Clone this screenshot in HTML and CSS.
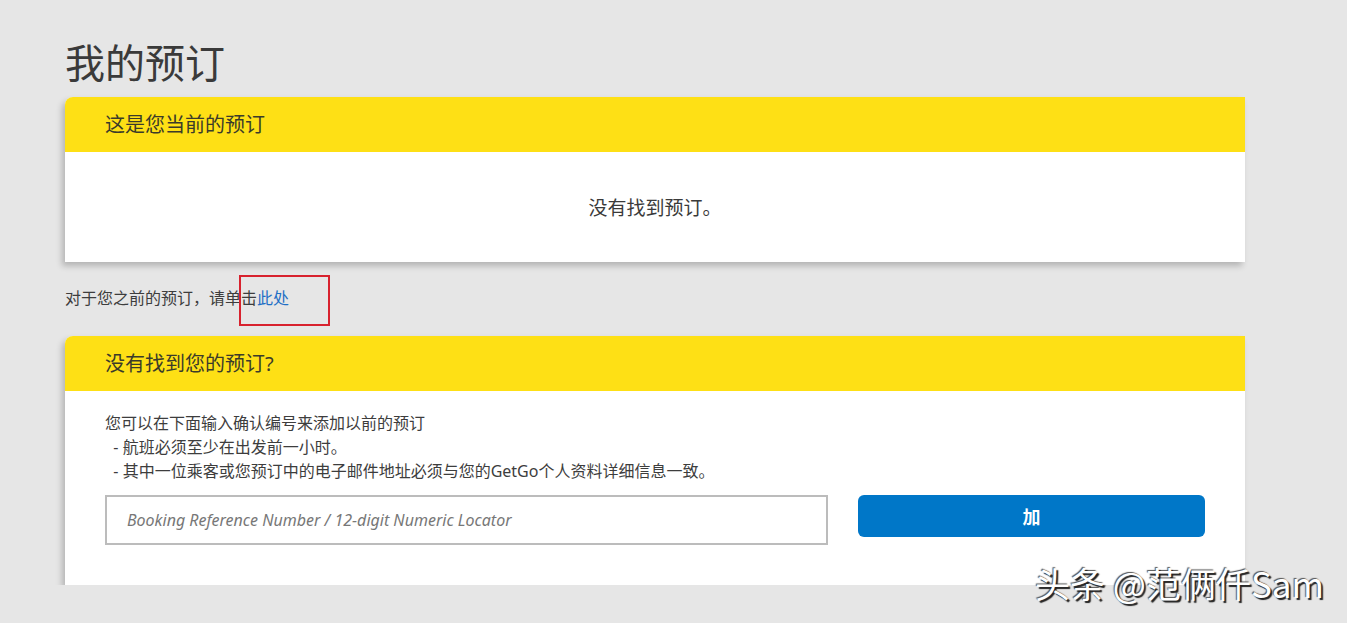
FILE: index.html
```html
<!DOCTYPE html>
<html lang="zh-CN">
<head>
    <meta charset="UTF-8">
    <meta name="viewport" content="width=device-width, initial-scale=1.0">
    <title>我的预订</title>
    <link rel="stylesheet" href="styles.css">
</head>
<body>
    <div class="page">
        <h1>我的预订</h1>

        <div class="card">
            <div class="card-header">这是您当前的预订</div>
            <div class="card-body empty-body">没有找到预订。</div>
        </div>

        <p class="past-link">对于您之前的预订，请单击<a href="#">此处</a><span class="mark-box"></span></p>

        <div class="card">
            <div class="card-header">没有找到您的预订?</div>
            <div class="card-body add-body">
                <div class="notes">
                    <div>您可以在下面输入确认编号来添加以前的预订</div>
                    <div>&nbsp;&nbsp;- 航班必须至少在出发前一小时。</div>
                    <div>&nbsp;&nbsp;- 其中一位乘客或您预订中的电子邮件地址必须与您的GetGo个人资料详细信息一致。</div>
                </div>
                <div class="add-row">
                    <input class="ref-input" type="text" placeholder="Booking Reference Number / 12-digit Numeric Locator">
                    <button class="add-button">加</button>
                </div>
            </div>
        </div>
    </div>

    <div class="watermark">头条 @范俩仟Sam</div>
</body>
</html>
```

FILE: styles.css
```css
body {
    margin: 0;
    background-color: #e6e6e6;
    font-family: "Noto Sans", "Noto Sans CJK SC", sans-serif;
    color: #3d3d3d;
}
.page {
    width: 1180px;
    margin-left: 65px;
}
h1 {
    font-size: 40px;
    line-height: 48px;
    font-weight: normal;
    color: #3a3a3a;
    margin: 39px 0 10px;
}
.card {
    background: white;
    border-radius: 8px 0 0 0;
    box-shadow: -3px 4px 6px rgba(0,0,0,0.22);
}
.card-header {
    height: 55px;
    line-height: 55px;
    padding-left: 40px;
    background-color: #fee015;
    border-radius: 8px 0 0 0;
    font-size: 20px;
    color: #3b3b2a;
}
.empty-body {
    height: 110px;
    line-height: 112px;
    text-align: center;
    font-size: 19px;
    color: #3a3a3a;
}
.past-link {
    position: relative;
    margin: 26px 0 28px;
    font-size: 16px;
    line-height: 20px;
}
.past-link a {
    color: #1f6fc5;
    text-decoration: none;
}
.mark-box {
    position: absolute;
    left: 174px;
    top: -13px;
    width: 87px;
    height: 47px;
    border: 2px solid #d8222e;
}
.add-body {
    padding: 20px 40px 40px;
}
.notes {
    font-size: 16px;
    line-height: 24px;
    color: #3d3d3d;
}
.add-row {
    display: grid;
    grid-template-columns: 723px 1fr;
    gap: 30px;
    margin-top: 12px;
    align-items: start;
}
.ref-input {
    height: 50px;
    box-sizing: border-box;
    border: 2px solid #bcbcbc;
    padding: 0 20px;
    font-family: "Noto Sans", sans-serif;
    font-size: 16px;
    font-style: italic;
    color: #333;
    outline: none;
}
.ref-input::placeholder {
    color: #777;
}
.add-button {
    height: 42px;
    border: none;
    border-radius: 6px;
    background-color: #0077c8;
    color: white;
    font-family: "Noto Sans CJK SC", sans-serif;
    font-size: 18px;
    font-weight: bold;
    cursor: pointer;
}
.watermark {
    position: absolute;
    left: 1035px;
    top: 560px;
    font-family: "Noto Sans CJK SC", sans-serif;
    font-size: 35px;
    line-height: 46px;
    color: white;
    text-shadow: 2px 2px 1px #222, -1px -1px 1px #555;
}
```
